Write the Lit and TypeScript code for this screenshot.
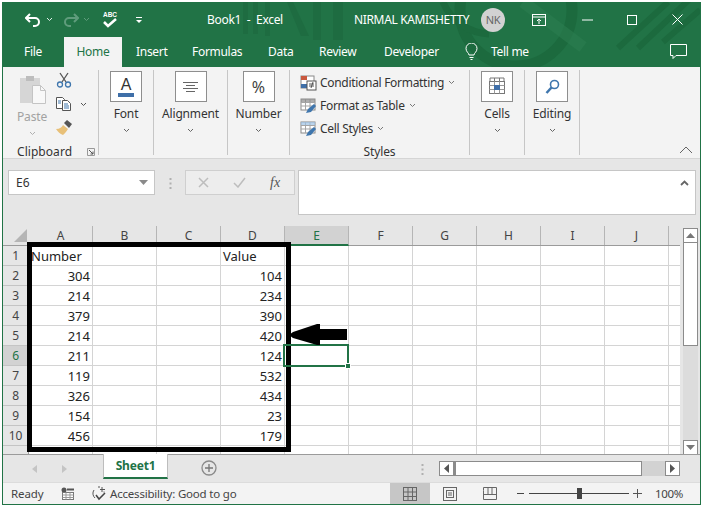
import { LitElement, html, css, svg } from "lit";
import { customElement } from "lit/decorators.js";

const COLS = ["A", "B", "C", "D", "E", "F", "G", "H", "I", "J", ""];
const ROWS: [string, string, string][] = [
  ["1", "Number", "Value"],
  ["2", "304", "104"],
  ["3", "214", "234"],
  ["4", "379", "390"],
  ["5", "214", "420"],
  ["6", "211", "124"],
  ["7", "119", "532"],
  ["8", "326", "434"],
  ["9", "154", "23"],
  ["10", "456", "179"],
  ["", "", ""],
];

const chev = (c = "#666") => html`<svg class="chev" width="7" height="5" viewBox="0 0 7 5"><path d="M1 1l2.5 2.5L6 1" fill="none" stroke=${c} stroke-width="1"/></svg>`;

const tableIcon = (accent: string) => html`<svg width="17" height="16" viewBox="0 0 17 16">
  <rect x="1" y="1" width="14" height="11" fill="#fff" stroke="#8a8a8a"/>
  <path d="M1 4.5h14M1 8h14M5.5 1v11M10 1v11" stroke="#a5a5a5" fill="none"/>
  <rect x="1" y="1" width="14" height="3" fill=${accent} opacity=".7"/>
  <path d="M6 15l2-4 6-5 2 2-5 6z" fill="#3f76ad"/>
</svg>`;

@customElement("app-root")
export class AppRoot extends LitElement {
  static styles = css`
    :host { display: block; width: 703px; height: 510px; background: #fff; padding: 2px 2px 5px 2px; box-sizing: border-box; font-family: "Noto Sans", "Open Sans", sans-serif; color: #333; overflow: hidden; }
    * { box-sizing: border-box; }
    svg { display: block; flex: none; }
    .window { position: relative; width: 699px; height: 503px; border: 1px solid #217346; border-width: 0 1px 1px 1px; display: flex; flex-direction: column; background: #e6e6e6; }

    .head { position: relative; height: 65px; background: #217346; color: #fff; flex: none; }
    .decor { position: absolute; left: 0; top: 0; }
    .title, .tabs { position: relative; display: flex; align-items: center; }
    .title { height: 35px; font-size: 12px; }
    .book { margin-left: 57px; width: 90px; text-align: center; white-space: nowrap; font-size: 12px; letter-spacing: -.3px; }
    .user { margin-left: 64px; font-size: 12px; letter-spacing: -.35px; white-space: nowrap; width: 127px; }
    .avatar { width: 24px; height: 24px; border-radius: 50%; background: #d2d2d2; color: #666; font-size: 11px; display: flex; align-items: center; justify-content: center; flex: none; letter-spacing: -.3px; }
    .qa1 { margin-left: 22px; }
    .qa2 { margin-left: 5px; }
    .qa3 { margin-left: 10px; }
    .qa4 { margin-left: 4px; }
    .qa5 { margin-left: 12px; }
    .qa6 { margin-left: 17px; }
    .w1 { margin-left: 27px; }
    .w2 { margin-left: 36px; }
    .w3 { margin-left: 34px; }
    .w4 { margin-left: 35px; }

    .tabs { height: 30px; font-size: 12px; }
    .tab { white-space: nowrap; letter-spacing: -.3px; line-height: 30px; }
    .tab.file { margin-left: 21px; width: 40px; }
    .tab.home { background: #f3f3f3; color: #217346; width: 58px; text-align: center; height: 30px; }
    .tab.insert { margin-left: 14px; width: 56px; }
    .tab.formulas { width: 76px; }
    .tab.data { width: 51px; }
    .tab.review { width: 65px; }
    .tab.dev { width: 81px; }
    .tab.tell { margin-left: 13px; width: 179px; }

    .ribbon { height: 92px; flex: none; background: #f3f3f3; border-bottom: 1px solid #d5d5d5; display: flex; padding-top: 3px; position: relative; }
    .group { height: 85px; border-right: 1px solid #c6c6c6; flex: none; display: flex; flex-direction: column; align-items: center; font-size: 12px; }
    .g-clip { width: 96px; flex-direction: row; align-items: flex-start; position: relative; }
    .g-font { width: 55px; }
    .g-align { width: 74px; }
    .g-num { width: 62px; }
    .g-styles { width: 180px; align-items: flex-start; }
    .g-cells { width: 55px; }
    .g-edit { width: 55px; }
    .box { width: 32px; height: 31px; margin-top: 1px; background: #fff; border: 1px solid #8e8e8e; display: flex; align-items: center; justify-content: center; font-size: 16px; color: #444; }
    .lbl { margin-top: 3px; line-height: 17px; white-space: nowrap; letter-spacing: -.15px; color: #333; }
    .chev { margin-top: 6px; }
    .paste { width: 48px; margin-left: 5px; display: flex; flex-direction: column; align-items: center; }
    .paste svg:first-child { margin-top: 5px; }
    .paste .lbl { color: #a2a2a2; margin-top: 3px; }
    .paste .chev { margin-top: 6px; }
    .small { display: flex; flex-direction: column; gap: 9px; margin-top: 2px; }
    .copy { display: flex; align-items: center; gap: 8px; }
    .copy .chev { margin-top: 0; }
    .clip-name { position: absolute; left: 14px; top: 73px; letter-spacing: .05px; line-height: 17px; }
    .launcher { position: absolute; left: 84px; top: 78px; }
    .style-list { display: flex; flex-direction: column; gap: 4px; margin-left: 10px; margin-top: 3px; height: 66px; }
    .style-row { display: flex; align-items: center; gap: 3px; height: 19px; white-space: nowrap; letter-spacing: -.3px; }
    .style-row .chev { margin: 0 0 0 1px; }
    .style-name { align-self: center; line-height: 17px; margin-top: 5px; letter-spacing: -.15px; }
    .collapse { position: absolute; left: 676px; top: 79px; }

    .formula { height: 67px; flex: none; background: #e6e6e6; display: flex; align-items: flex-start; padding: 11px 0 0 5px; }
    .namebox { width: 147px; height: 25px; background: #fff; border: 1px solid #c6c6c6; display: flex; align-items: center; justify-content: space-between; padding: 0 6px 0 7px; font-size: 12px; }
    .dots { width: 30px; display: flex; justify-content: center; padding-top: 8px; }
    .fbtns { width: 110px; height: 25px; background: #ededed; border: 1px solid #cfcfcf; display: flex; align-items: center; padding-left: 12px; gap: 24px; }
    .fx { font-family: "Liberation Serif", serif; font-style: italic; font-size: 14px; color: #555; }
    .finput { margin-left: 3px; width: 398px; height: 45px; background: #fff; border: 1px solid #c6c6c6; display: flex; justify-content: flex-end; padding: 9px 6px 0 0; }

    .main { flex: 1; display: flex; min-height: 0; }
    .sheet { width: 677px; height: 228px; position: relative; flex: none; overflow: hidden; display: flex; flex-direction: column; background: #fff; }
    .hrow { display: flex; height: 20px; flex: none; background: #e6e6e6; border-bottom: 1px solid #9b9b9b; }
    .corner { width: 26px; flex: none; display: flex; align-items: flex-end; justify-content: flex-end; padding: 0 2px 3px 0; }
    .hcell { width: 64px; flex: none; display: flex; align-items: center; justify-content: center; font-size: 12px; color: #444; border-right: 1px solid #b5b5b5; }
    .hcell.k { width: 11px; border-right: 0; }
    .hcell.sel { background: #d2d2d2; color: #217346; border-bottom: 2px solid #217346; height: 20px; }
    .row { display: flex; height: 20px; flex: none; }
    .rnum { width: 26px; flex: none; background: #e6e6e6; display: flex; align-items: center; justify-content: center; font-size: 12px; color: #444; border-right: 1px solid #9b9b9b; border-bottom: 1px solid #c4c4c4; letter-spacing: -.2px; }
    .rnum.sel { background: #d2d2d2; color: #217346; }
    .cell { width: 64px; flex: none; border-right: 1px solid #d4d4d4; border-bottom: 1px solid #d4d4d4; font-size: 13px; color: #222; line-height: 21px; padding: 0 2px; white-space: nowrap; }
    .cell.k { width: 11px; border-right: 0; }
    .num { text-align: right; }
    .frame { position: absolute; left: 24px; top: 16px; width: 264px; height: 210px; border: 5px solid #000; pointer-events: none; }
    .arrow { position: absolute; left: 286px; top: 98px; }
    .selbox { position: absolute; left: 280px; top: 118px; width: 66px; height: 23px; border: 2px solid #217346; }
    .handle { position: absolute; right: -4px; bottom: -4px; width: 6px; height: 6px; background: #217346; border: 1px solid #fff; }

    .vscroll { flex: 1; padding: 2px 2px 0 3px; display: flex; flex-direction: column; height: 229px; }
    .sbtn { background: #fff; border: 1px solid #8b8b8b; display: flex; align-items: center; justify-content: center; flex: none; }
    .sbtn.v { width: 15px; height: 15px; }
    .sthumb { width: 15px; height: 103px; background: #fff; border: 1px solid #8b8b8b; border-top: 0; flex: none; }
    .strack { flex: 1; background: #dcdcdc; width: 15px; }

    .tabsbar { height: 28px; flex: none; background: #e6e6e6; display: flex; align-items: flex-start; border-top: 1px solid #9b9b9b; margin-top: -1px; position: relative; }
    .navs { width: 100px; display: flex; gap: 25px; padding: 10px 0 0 29px; }
    .sheettab { width: 65px; height: 25px; background: #fff; border-left: 1px solid #bdbdbd; border-right: 1px solid #bdbdbd; border-bottom: 2px solid #217346; color: #217346; font-weight: 700; font-size: 12px; display: flex; align-items: center; justify-content: center; margin-top: -1px; letter-spacing: -.2px; }
    .plus { margin-left: 33px; margin-top: 5px; }
    .tdots { margin-left: 204px; margin-top: 9px; }
    .hscroll { margin-left: 15px; margin-top: 6px; display: flex; width: 241px; height: 15px; }
    .sbtn.h { width: 15px; height: 15px; }
    .hthumb { width: 188px; height: 15px; background: #fff; border: 1px solid #8b8b8b; border-left-width: 2px; }
    .htrack { flex: 1; background: #d2d2d2; }

    .status { height: 22px; flex: none; background: #f3f3f3; border-top: 1px solid #dcdcdc; display: flex; align-items: center; font-size: 11.5px; color: #444; position: relative; white-space: nowrap; }
    .ready { margin-left: 8px; width: 50px; letter-spacing: -.1px; }
    .macro { margin-right: 16px; }
    .acc { margin-left: 2px; letter-spacing: -.2px; width: 280px; }
    .view { width: 40px; height: 21px; display: flex; align-items: center; justify-content: center; flex: none; }
    .view.on { background: #c6c6c6; }
    .zoomctl { display: flex; align-items: center; margin-left: 7px; }
    .zline { position: relative; width: 100px; height: 1px; background: #444; margin: 0 4px 0 5px; }
    .zthumb { position: absolute; left: 48px; top: -5px; width: 5px; height: 11px; background: #444; }
    .pct { margin-left: 13px; letter-spacing: -.35px; font-size: 11.5px; }
  `;

  private decor() {
    return html`<svg class="decor" width="697" height="65" viewBox="0 0 697 65">
      ${svg`<g fill="#1e6b40" opacity=".8">
        <rect x="240" y="0" width="5" height="32"/><rect x="250" y="0" width="5" height="32"/><rect x="262" y="0" width="5" height="34"/>
        <rect x="310" y="0" width="8" height="38"/><rect x="330" y="0" width="10" height="38"/>
        <path d="M290 0l16 34h-8L284 0z"/>
      </g>
      <g fill="none" stroke="#1c6a3e" opacity=".9">
        <circle cx="513" cy="8" r="56" stroke-width="11"/>
        <path d="M440 0a52 52 0 0 0 46 32" stroke-width="7"/>
        <path d="M615 46L665 0M635 46L690 -6M660 40L697 8" stroke-width="6"/>
      </g>
      <path d="M520 0l60 45" stroke="#2b7d50" stroke-width="12" opacity=".6" fill="none"/>`}
    </svg>`;
  }

  private titleBar() {
    return html`<div class="title">
      <svg class="qa1" width="16" height="14" viewBox="0 0 16 14"><path d="M5 1L1 5l4 4" fill="none" stroke="#fff" stroke-width="2"/><path d="M1.5 5H10a4 4 0 0 1 0 8H8" fill="none" stroke="#fff" stroke-width="2"/></svg>
      <svg class="qa2" width="7" height="5" viewBox="0 0 7 5"><path d="M1 1l2.5 2.5L6 1" fill="none" stroke="#dfeee6"/></svg>
      <svg class="qa3" width="16" height="14" viewBox="0 0 16 14"><path d="M11 1l4 4-4 4" fill="none" stroke="#5f9c7c" stroke-width="2"/><path d="M14.500 5H6a4 4 0 0 0 0 8h2" fill="none" stroke="#5f9c7c" stroke-width="2"/></svg>
      <svg class="qa4" width="7" height="5" viewBox="0 0 7 5"><path d="M1 1l2.5 2.5L6 1" fill="none" stroke="#5f9c7c"/></svg>
      <svg class="qa5" width="16" height="20" viewBox="0 0 16 20"><text x="8" y="7" text-anchor="middle" font-size="6.500" font-weight="700" fill="#fff" font-family="Liberation Sans">ABC</text><path d="M2 12l4 4 8-7" fill="none" stroke="#fff" stroke-width="2.500"/></svg>
      <svg class="qa6" width="8" height="8" viewBox="0 0 8 8"><path d="M1 1.500h6" stroke="#fff"/><path d="M1 4h6L4 7z" fill="#fff"/></svg>
      <span class="book">Book1 &nbsp;-&nbsp; Excel</span>
      <span class="user">NIRMAL KAMISHETTY</span>
      <span class="avatar">NK</span>
      <svg class="w1" width="14" height="12" viewBox="0 0 14 12"><rect x=".5" y=".5" width="13" height="11" fill="none" stroke="#fff"/><path d="M1 3h12M7 10V5M5 7l2-2 2 2" fill="none" stroke="#fff"/></svg>
      <svg class="w2" width="11" height="2" viewBox="0 0 11 2"><path d="M0 1h11" stroke="#fff"/></svg>
      <svg class="w3" width="10" height="10" viewBox="0 0 10 10"><rect x=".5" y=".5" width="9" height="9" fill="none" stroke="#fff"/></svg>
      <svg class="w4" width="11" height="11" viewBox="0 0 11 11"><path d="M.5.5l10 10M10.500.5l-10 10" stroke="#fff" fill="none"/></svg>
    </div>`;
  }

  private tabs() {
    return html`<div class="tabs">
      <span class="tab file">File</span>
      <span class="tab home">Home</span>
      <span class="tab insert">Insert</span>
      <span class="tab formulas">Formulas</span>
      <span class="tab data">Data</span>
      <span class="tab review">Review</span>
      <span class="tab dev">Developer</span>
      <svg width="13" height="18" viewBox="0 0 13 18"><path d="M4 12c0-2-3-3-3-6.500a5.500 5.500 0 0 1 11 0C12 9 9 10 9 12z M4.500 14.500h4M5.500 16.500h2" fill="none" stroke="#fff"/></svg>
      <span class="tab tell">Tell me</span>
      <svg width="17" height="16" viewBox="0 0 17 16"><path d="M.5.5h16v11H6l-3 3v-3H.5z" fill="none" stroke="#fff"/></svg>
    </div>`;
  }

  private clipboard() {
    return html`<div class="group g-clip">
      <div class="paste">
        <svg width="29" height="30" viewBox="0 0 29 30">
          <rect x="2" y="3" width="20" height="25" fill="#d6d6d6"/>
          <rect x="8" y="1" width="8" height="5" fill="#bdbdbd"/>
          <path d="M14.500 10.500h8l5 5v13h-13z" fill="#f8f8f8" stroke="#c4c4c4"/>
          <path d="M22.500 10.500v5h5" fill="none" stroke="#c4c4c4"/>
        </svg>
        <span class="lbl">Paste</span>
        ${chev("#b0b0b0")}
      </div>
      <div class="small">
        <svg width="16" height="16" viewBox="0 0 16 16"><path d="M4 1l6 9M12 1l-6 9" stroke="#555" stroke-width="1.300" fill="none"/><circle cx="4" cy="12.500" r="2.500" fill="none" stroke="#3f76ad" stroke-width="1.300"/><circle cx="12" cy="12.500" r="2.500" fill="none" stroke="#3f76ad" stroke-width="1.300"/></svg>
        <div class="copy">
          <svg width="16" height="14" viewBox="0 0 16 14"><path d="M.5.500h6l2 2v9H.5z" fill="#fff" stroke="#555"/><path d="M6.500 3.500h5l3 3v7h-8z" fill="#fff" stroke="#555"/><path d="M2 4h3M2 6h3M8 7h4M8 9h5M8 11h5" stroke="#3f76ad"/></svg>
          ${chev("#555")}
        </div>
        <svg width="17" height="15" viewBox="0 0 17 15"><path d="M0 9c4 0 6-2 7-4l5 4c-2 3-3 4-5 6-3-1-5-3-7-6z" fill="#e8c078"/><path d="M8 3l3-3 5 4-3 4z" fill="#555"/></svg>
      </div>
      <span class="clip-name">Clipboard</span>
      <svg class="launcher" width="8" height="8" viewBox="0 0 8 8"><path d="M.5 7.500V.500h7v7z" fill="none" stroke="#999"/><path d="M2 2l4 4M6 3.500V6H3.500" fill="none" stroke="#555"/></svg>
    </div>`;
  }

  private big(cls: string, icon: unknown, label: string) {
    return html`<div class="group ${cls}"><div class="box">${icon}</div><span class="lbl">${label}</span>${chev()}</div>`;
  }

  private ribbon() {
    const fontIcon = html`<svg width="18" height="22" viewBox="0 0 18 22"><text x="9" y="14" text-anchor="middle" font-size="16" fill="#333" font-family="Liberation Sans">A</text><rect x="1" y="17" width="16" height="4" fill="#3f6fa8"/></svg>`;
    const alignIcon = html`<svg width="15" height="10" viewBox="0 0 15 10"><path d="M0 .5h15M3 3.500h9M0 6.500h15M3 9.500h9" stroke="#666"/></svg>`;
    const cellsIcon = html`<svg width="16" height="19" viewBox="0 0 16 19"><path d="M1 1h14M1 1v3M15 1v3M5.500 1v3M10.500 1v3" stroke="#777"/><rect x=".5" y="4.500" width="15" height="12" fill="#fff" stroke="#777"/><path d="M.5 8.500h15M.5 12.500h15M5.500 4.500v12M10.500 4.500v12" stroke="#999"/><rect x="5" y="8" width="6" height="5" fill="#3f6fa8"/></svg>`;
    const editIcon = html`<svg width="15" height="16" viewBox="0 0 15 16"><circle cx="9.500" cy="5.500" r="4" fill="none" stroke="#3f76ad" stroke-width="1.600"/><path d="M6.500 8.500L1.500 14" stroke="#3f76ad" stroke-width="2.500"/></svg>`;
    return html`<div class="ribbon">
      ${this.clipboard()}
      ${this.big("g-font", fontIcon, "Font")}
      ${this.big("g-align", alignIcon, "Alignment")}
      ${this.big("g-num", html`%`, "Number")}
      <div class="group g-styles">
        <div class="style-list">
          <div class="style-row">
            <svg width="17" height="16" viewBox="0 0 17 16"><rect x="1" y="1" width="13" height="12" fill="#fff" stroke="#8a8a8a"/><rect x="1" y="1" width="6" height="4" fill="#c9583e"/><rect x="1" y="9" width="6" height="4" fill="#3f6fa8"/><rect x="7" y="6" width="9" height="9" fill="#fff" stroke="#555"/><path d="M9 9h5M9 11h5M11 13l2-6" stroke="#555"/></svg>
            <span>Conditional Formatting</span>${chev("#777")}
          </div>
          <div class="style-row">${tableIcon("#8a8a8a")}<span>Format as Table</span>${chev("#777")}</div>
          <div class="style-row">${tableIcon("#9cc0e2")}<span>Cell Styles</span>${chev("#777")}</div>
        </div>
        <span class="style-name">Styles</span>
      </div>
      ${this.big("g-cells", cellsIcon, "Cells")}
      ${this.big("g-edit", editIcon, "Editing")}
      <svg class="collapse" width="14" height="8" viewBox="0 0 14 8"><path d="M1 7l6-6 6 6" fill="none" stroke="#666"/></svg>
    </div>`;
  }

  private formula() {
    return html`<div class="formula">
      <div class="namebox"><span>E6</span><svg width="9" height="5" viewBox="0 0 9 5"><path d="M0 0h9L4.500 5z" fill="#8a8a8a"/></svg></div>
      <div class="dots"><svg width="3" height="11" viewBox="0 0 3 11"><path d="M1.500 0v2M1.500 4.500v2M1.500 9v2" stroke="#b0b0b0" stroke-width="2"/></svg></div>
      <div class="fbtns">
        <svg width="11" height="11" viewBox="0 0 11 11"><path d="M1 1l9 9M10 1l-9 9" stroke="#bdbdbd" stroke-width="1.500"/></svg>
        <svg width="13" height="11" viewBox="0 0 13 11"><path d="M1 6l4 4 7-9" fill="none" stroke="#bdbdbd" stroke-width="1.500"/></svg>
        <span class="fx">fx</span>
      </div>
      <div class="finput"><svg width="9" height="6" viewBox="0 0 9 6"><path d="M1 5l3.500-3.500L8 5" fill="none" stroke="#666" stroke-width="1.800"/></svg></div>
    </div>`;
  }

  private sheet() {
    return html`<div class="sheet">
      <div class="hrow">
        <div class="corner"><svg width="13" height="13" viewBox="0 0 13 13"><path d="M13 0v13H0z" fill="#b5b5b5"/></svg></div>
        ${COLS.map((c, i) => html`<div class="hcell ${c === "E" ? "sel" : ""} ${i === 10 ? "k" : ""}">${c}</div>`)}
      </div>
      ${ROWS.map((r) => html`<div class="row">
        <div class="rnum ${r[0] === "6" ? "sel" : ""}">${r[0]}</div>
        ${COLS.map((_, i) => {
          const v = i === 0 ? r[1] : i === 3 ? r[2] : "";
          const isNum = /^\d+$/.test(v);
          return html`<div class="cell ${isNum ? "num" : ""} ${i === 10 ? "k" : ""}">${v}</div>`;
        })}
      </div>`)}
      <div class="frame"></div>
      <div class="selbox"><div class="handle"></div></div>
      <svg class="arrow" width="58" height="22" viewBox="0 0 58 22"><path d="M0 11L4 8L28 0h3v5h27v11H31v5h-3L4 14z" fill="#000"/></svg>
    </div>`;
  }

  private vscroll() {
    return html`<div class="vscroll">
      <div class="sbtn v"><svg width="9" height="5" viewBox="0 0 9 5"><path d="M0 5h9L4.500 0z" fill="#777"/></svg></div>
      <div class="sthumb"></div>
      <div class="strack"></div>
      <div class="sbtn v"><svg width="9" height="5" viewBox="0 0 9 5"><path d="M0 0h9L4.500 5z" fill="#777"/></svg></div>
    </div>`;
  }

  private tabsBar() {
    return html`<div class="tabsbar">
      <div class="navs">
        <svg width="5" height="8" viewBox="0 0 5 8"><path d="M5 0v8L0 4z" fill="#c4c4c4"/></svg>
        <svg width="5" height="8" viewBox="0 0 5 8"><path d="M0 0v8l5-4z" fill="#c4c4c4"/></svg>
      </div>
      <div class="sheettab">Sheet1</div>
      <svg class="plus" width="16" height="16" viewBox="0 0 16 16"><circle cx="8" cy="8" r="7" fill="none" stroke="#8a8a8a" stroke-width="1.300"/><path d="M8 4v8M4 8h8" stroke="#777" stroke-width="1.300"/></svg>
      <svg class="tdots" width="3" height="11" viewBox="0 0 3 11"><path d="M1.500 0v2M1.500 4.500v2M1.500 9v2" stroke="#b0b0b0" stroke-width="2"/></svg>
      <div class="hscroll">
        <div class="sbtn h"><svg width="5" height="9" viewBox="0 0 5 9"><path d="M5 0v9L0 4.500z" fill="#555"/></svg></div>
        <div class="hthumb"></div>
        <div class="htrack"></div>
        <div class="sbtn h"><svg width="5" height="9" viewBox="0 0 5 9"><path d="M0 0v9l5-4.500z" fill="#555"/></svg></div>
      </div>
    </div>`;
  }

  private statusBar() {
    return html`<div class="status">
      <span class="ready">Ready</span>
      <svg class="macro" width="14" height="13" viewBox="0 0 14 13"><circle cx="3" cy="3" r="2.500" fill="#555"/><path d="M6 1.500h7v2H6z" fill="#555"/><rect x="1.500" y="5.500" width="11" height="7" fill="#fff" stroke="#777"/><path d="M1.500 8h11M1.500 10.500h11M5 5.500v7M9 5.500v7" stroke="#999"/></svg>
      <svg width="17" height="15" viewBox="0 0 17 15"><path d="M3 4a6 6 0 0 0 1 8M7 1h2M13 5.500v1" fill="none" stroke="#555"/><path d="M11 1v5M9 3.500h5" stroke="#555"/><path d="M5 9l3 4 6-6" fill="none" stroke="#444" stroke-width="1.500"/></svg>
      <span class="acc">Accessibility: Good to go</span>
      <div class="view on"><svg width="14" height="14" viewBox="0 0 14 14"><rect x=".5" y=".5" width="13" height="13" fill="none" stroke="#666"/><path d="M.5 5h13M.5 9.500h13M5 .5v13M9.500 .5v13" stroke="#666"/></svg></div>
      <div class="view"><svg width="14" height="14" viewBox="0 0 14 14"><rect x=".5" y=".5" width="13" height="13" fill="none" stroke="#666"/><rect x="3.500" y="3.500" width="7" height="7" fill="none" stroke="#666"/><path d="M5 6h4M5 8h4" stroke="#666"/></svg></div>
      <div class="view"><svg width="14" height="13" viewBox="0 0 14 13"><path d="M.5 3.500v9h13v-12h-13zM.5 7.500h13M5 .5v7M9 .5v7" fill="none" stroke="#666"/></svg></div>
      <div class="zoomctl">
        <svg width="7" height="1" viewBox="0 0 7 1"><path d="M0 .5h7" stroke="#444"/></svg>
        <div class="zline"><div class="zthumb"></div></div>
        <svg width="9" height="9" viewBox="0 0 9 9"><path d="M0 4.500h9M4.500 0v9" stroke="#555"/></svg>
        <span class="pct">100%</span>
      </div>
    </div>`;
  }

  render() {
    return html`<div class="window">
      <div class="head">${this.decor()}${this.titleBar()}${this.tabs()}</div>
      ${this.ribbon()}
      ${this.formula()}
      <div class="main">${this.sheet()}${this.vscroll()}</div>
      ${this.tabsBar()}
      ${this.statusBar()}
    </div>`;
  }
}
